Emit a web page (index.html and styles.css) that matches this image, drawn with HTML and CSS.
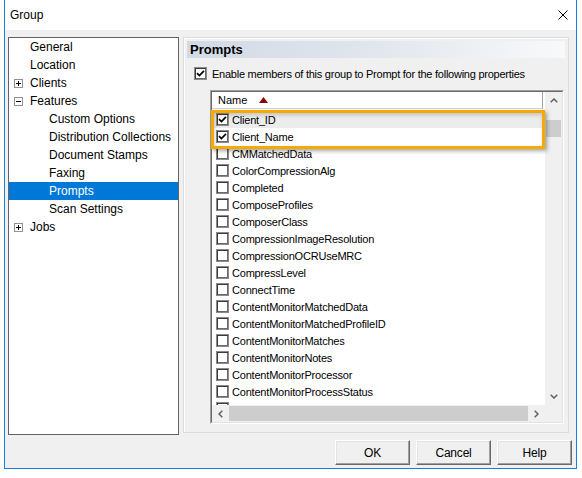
FILE: index.html
```html
<!DOCTYPE html>
<html>
<head>
<meta charset="utf-8">
<title>Group</title>
<link rel="stylesheet" href="styles.css">
</head>
<body>
<div class="window">
  <div class="titlebar">
    <span class="title">Group</span>
    <svg class="close" width="10" height="10" viewBox="0 0 10 10"><path d="M0.5 0.5 L9.5 9.5 M9.5 0.5 L0.5 9.5" stroke="#000" stroke-width="1" fill="none"/></svg>
  </div>
  <div class="body">
    <div class="main">
      <div class="tree">
        <div class="node"><span class="exp"></span>General</div>
        <div class="node"><span class="exp"></span>Location</div>
        <div class="node"><span class="exp box"><svg width="9" height="9" viewBox="0 0 9 9"><rect x="0.5" y="0.5" width="8" height="8" fill="#fff" stroke="#919191"/><path d="M2 4.5 H7 M4.5 2 V7" stroke="#000" stroke-width="1"/></svg></span>Clients</div>
        <div class="node"><span class="exp box"><svg width="9" height="9" viewBox="0 0 9 9"><rect x="0.5" y="0.5" width="8" height="8" fill="#fff" stroke="#919191"/><path d="M2 4.5 H7" stroke="#000" stroke-width="1"/></svg></span>Features</div>
        <div class="node sub">Custom Options</div>
        <div class="node sub">Distribution Collections</div>
        <div class="node sub">Document Stamps</div>
        <div class="node sub">Faxing</div>
        <div class="node sub active">Prompts</div>
        <div class="node sub">Scan Settings</div>
        <div class="node"><span class="exp box"><svg width="9" height="9" viewBox="0 0 9 9"><rect x="0.5" y="0.5" width="8" height="8" fill="#fff" stroke="#919191"/><path d="M2 4.5 H7 M4.5 2 V7" stroke="#000" stroke-width="1"/></svg></span>Jobs</div>
      </div>
      <div class="panel">
        <div class="panel-head">Prompts</div>
        <div class="enable">
          <span class="cb"><svg width="9" height="9" viewBox="0 0 9 9"><path d="M1 4.2 L3.4 6.6 L8 1.8" stroke="#000" stroke-width="1.7" fill="none"/></svg></span>
          <span>Enable members of this group to Prompt for the following properties</span>
        </div>
        <div class="listbox">
          <div class="listbox-inner">
            <div class="list-top">
              <div class="list-main">
                <div class="list-head">
                  <span class="col-name">Name</span>
                  <svg class="sort" width="9" height="6" viewBox="0 0 9 6"><path d="M4.5 0 L9 6 L0 6 Z" fill="#8b0000"/></svg>
                </div>
                <div class="rows">
                  <div class="row sel"><span class="cb"><svg width="9" height="9" viewBox="0 0 9 9"><path d="M1 4.2 L3.4 6.6 L8 1.8" stroke="#000" stroke-width="1.7" fill="none"/></svg></span>Client_ID</div>
                  <div class="row"><span class="cb"><svg width="9" height="9" viewBox="0 0 9 9"><path d="M1 4.2 L3.4 6.6 L8 1.8" stroke="#000" stroke-width="1.7" fill="none"/></svg></span>Client_Name</div>
                  <div class="row"><span class="cb"></span>CMMatchedData</div>
                  <div class="row"><span class="cb"></span>ColorCompressionAlg</div>
                  <div class="row"><span class="cb"></span>Completed</div>
                  <div class="row"><span class="cb"></span>ComposeProfiles</div>
                  <div class="row"><span class="cb"></span>ComposerClass</div>
                  <div class="row"><span class="cb"></span>CompressionImageResolution</div>
                  <div class="row"><span class="cb"></span>CompressionOCRUseMRC</div>
                  <div class="row"><span class="cb"></span>CompressLevel</div>
                  <div class="row"><span class="cb"></span>ConnectTime</div>
                  <div class="row"><span class="cb"></span>ContentMonitorMatchedData</div>
                  <div class="row"><span class="cb"></span>ContentMonitorMatchedProfileID</div>
                  <div class="row"><span class="cb"></span>ContentMonitorMatches</div>
                  <div class="row"><span class="cb"></span>ContentMonitorNotes</div>
                  <div class="row"><span class="cb"></span>ContentMonitorProcessor</div>
                  <div class="row"><span class="cb"></span>ContentMonitorProcessStatus</div>
                  <div class="row"><span class="cb"></span>ContentMonitorProfileID</div>
                </div>
                <div class="highlight"></div>
              </div>
              <div class="vscroll">
                <div class="sbtn"><svg width="8" height="5" viewBox="0 0 8 5"><path d="M0.7 4.3 L4 1 L7.3 4.3" stroke="#606060" stroke-width="1.5" fill="none"/></svg></div>
                <div class="vtrack"><div class="vthumb"></div></div>
                <div class="sbtn"><svg width="8" height="5" viewBox="0 0 8 5"><path d="M0.7 0.7 L4 4 L7.3 0.7" stroke="#606060" stroke-width="1.5" fill="none"/></svg></div>
              </div>
            </div>
            <div class="list-bottom">
              <div class="hscroll">
                <div class="sbtn"><svg width="5" height="8" viewBox="0 0 5 8"><path d="M4.3 0.7 L1 4 L4.3 7.3" stroke="#606060" stroke-width="1.5" fill="none"/></svg></div>
                <div class="hthumb"></div>
                <div class="sbtn"><svg width="5" height="8" viewBox="0 0 5 8"><path d="M0.7 0.7 L4 4 L0.7 7.3" stroke="#606060" stroke-width="1.5" fill="none"/></svg></div>
              </div>
              <div class="corner"></div>
            </div>
          </div>
        </div>
      </div>
    </div>
    <div class="buttons">
      <div class="btn">OK</div>
      <div class="btn">Cancel</div>
      <div class="btn">Help</div>
    </div>
  </div>
</div>
</body>
</html>
```

FILE: styles.css
```css
* { box-sizing: border-box; }
html, body { margin: 0; padding: 0; background: #fff; }
body {
  font-family: "Liberation Sans", Arial, sans-serif;
  font-size: 12px;
  color: #000;
  width: 582px;
  height: 478px;
  overflow: hidden;
}
.window {
  margin-left: 4px;
  width: 573px;
  height: 469px;
  border: 1px solid #1a7fd6;
  border-top: none;
  display: flex;
  flex-direction: column;
  background: #f0f0f0;
}
.titlebar {
  height: 30px;
  background: #fff;
  display: flex;
  align-items: center;
  justify-content: space-between;
  padding: 0 8px 0 5px;
}
.title { font-size: 12px; }
.close { display: block; }
.body {
  flex: 1;
  display: flex;
  flex-direction: column;
  padding: 7px 7px 3px 3px;
}
.main {
  display: flex;
  align-items: flex-start;
  gap: 4px;
}
.tree {
  width: 171px;
  height: 398px;
  border: 1px solid #646464;
  background: #fff;
}
.node {
  height: 18px;
  line-height: 18px;
  padding-left: 5px;
  display: flex;
  align-items: center;
  white-space: nowrap;
}
.exp {
  width: 9px;
  height: 9px;
  margin-right: 7px;
  flex: none;
}
.exp svg { display: block; }
.node.sub { padding-left: 40px; }
.node.active { background: #0078d7; color: #fff; }
.panel {
  width: 386px;
  height: 396px;
  border: 1px solid #dcdcdc;
  box-shadow: inset 1px 1px #fff;
  padding: 3px;
  display: flex;
  flex-direction: column;
}
.panel-head {
  height: 17px;
  line-height: 17px;
  padding-left: 3px;
  font-weight: bold;
  font-size: 13px;
  background: linear-gradient(to right, #d2dae5 0%, #dfe5ed 45%, #f8f9fa 100%);
}
.enable {
  display: flex;
  align-items: center;
  margin: 9px 0 0 7px;
  font-size: 11px;
  letter-spacing: -0.25px;
  height: 13px;
}
.cb {
  width: 13px;
  height: 13px;
  flex: none;
  background: #fff;
  border: 1px solid #8a8a8a;
  box-shadow: inset 1px 1px #3c3c3c, inset -1px -1px #6a6a6a;
  display: flex;
  align-items: center;
  justify-content: center;
}
.cb svg { display: block; }
.enable .cb { margin-right: 5px; }
.listbox {
  margin: 10px 0 0 23px;
  width: 354px;
  height: 334px;
  border: 1px solid;
  border-color: #a0a0a0 #fff #fff #a0a0a0;
}
.listbox-inner {
  width: 100%;
  height: 100%;
  border: 1px solid;
  border-color: #696969 #e3e3e3 #e3e3e3 #696969;
  background: #fff;
  display: flex;
  flex-direction: column;
}
.list-top {
  display: flex;
  height: 313px;
}
.list-main {
  position: relative;
  width: 333px;
  height: 313px;
  overflow: visible;
}
.list-head {
  height: 17px;
  border-bottom: 1px solid #d5d5d5;
  border-right: 1px solid #a0a0a0;
  margin-right: 2px;
  display: flex;
  align-items: center;
  padding-left: 6px;
  font-size: 11px;
}
.sort { margin-left: 12px; margin-top: -1px; }
.rows {
  height: 296px;
  overflow: hidden;
  padding-top: 2px;
}
.row {
  height: 17px;
  display: flex;
  align-items: center;
  padding-left: 4px;
  font-size: 11px;
  letter-spacing: -0.2px;
  white-space: nowrap;
}
.row .cb { margin-right: 3px; }
.row.sel { background: #ececec; }
.highlight {
  position: absolute;
  left: -1px;
  top: 18px;
  width: 334px;
  height: 39px;
  border: 3px solid #f6a900;
  box-shadow: 2px 2px 4px rgba(0,0,0,0.35), inset 1px 2px 4px rgba(0,0,0,0.18);
}
.vscroll {
  width: 17px;
  height: 313px;
  background: #f0f0f0;
  display: flex;
  flex-direction: column;
}
.sbtn {
  width: 17px;
  height: 17px;
  flex: none;
  display: flex;
  align-items: center;
  justify-content: center;
}
.vtrack { flex: 1; padding: 11px 1px 0 1px; }
.vthumb { height: 17px; background: #cdcdcd; }
.list-bottom {
  display: flex;
  height: 17px;
}
.hscroll {
  width: 333px;
  display: flex;
  align-items: stretch;
  background: #f0f0f0;
}
.hthumb { flex: 1; background: #cdcdcd; margin: 1px 0; }
.corner { width: 17px; background: #f0f0f0; }
.buttons {
  display: flex;
  justify-content: flex-end;
  gap: 6px;
  margin: 5px -3px 0 0;
}
.btn {
  width: 75px;
  height: 25px;
  background: #f0f0f0;
  border: 1px solid;
  border-color: #fff #696969 #696969 #fff;
  box-shadow: inset -1px -1px #a0a0a0, inset 1px 1px #e3e3e3;
  display: flex;
  align-items: center;
  justify-content: center;
  font-size: 12px;
  letter-spacing: -0.2px;
}
```
